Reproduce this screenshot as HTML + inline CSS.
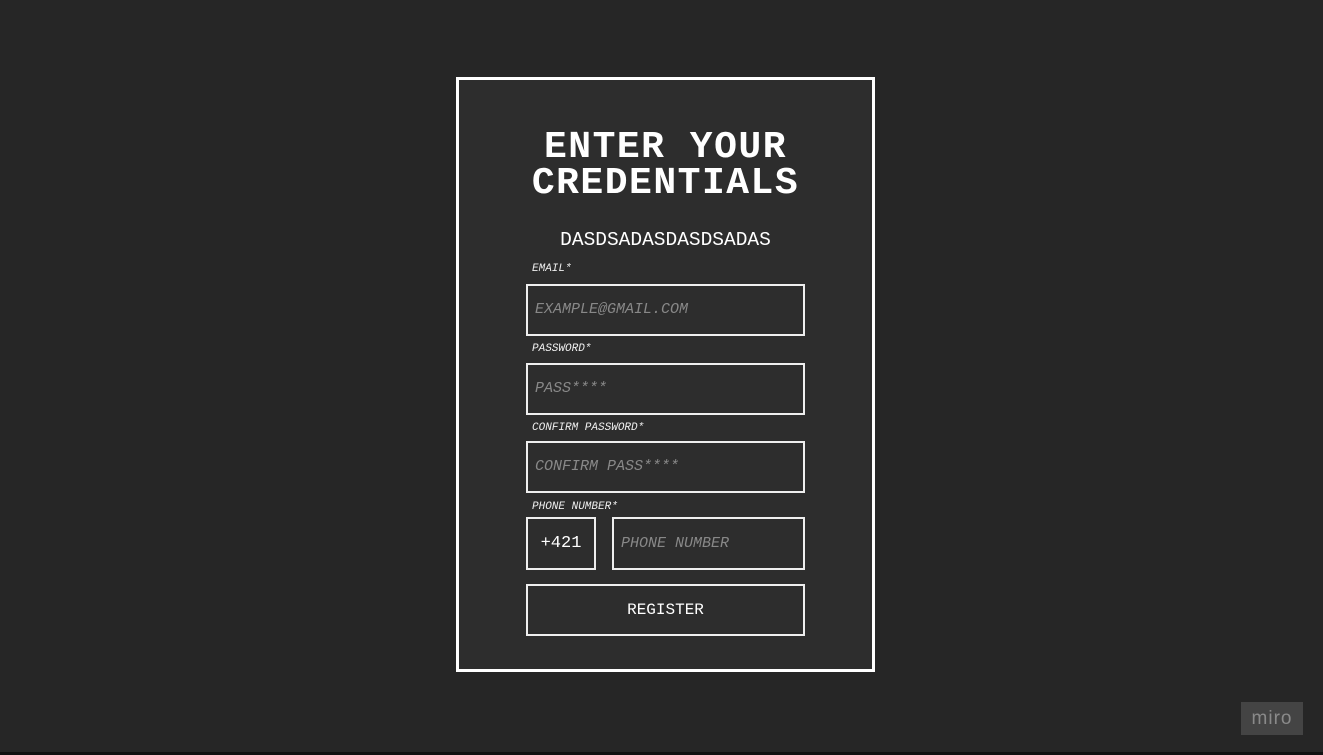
<!DOCTYPE html>
<html><head><style>
body{margin:0;width:1323px;height:755px;background:#262626;position:relative;overflow:hidden;font-family:"Liberation Mono",monospace;color:#fff}
.bar{position:absolute;left:0;top:752px;width:1323px;height:3px;background:#111}
.card{position:absolute;left:456px;top:77px;width:413px;height:589px;border:3px solid #fff;background:#2d2d2d}
.a{position:absolute}
.t{left:0;width:419px;text-align:center;font-size:38px;font-weight:bold;line-height:36px;top:130px;letter-spacing:1.5px}
.s{left:0;width:419px;text-align:center;font-size:19.5px;top:229px}
.l{font-size:11px;font-style:italic;left:532px;color:#eee}
.b{border:2px solid #eee;box-sizing:border-box;height:52px}
.p{font-size:15px;font-style:italic;color:#888;padding-left:7px;line-height:48px}
.miro{position:absolute;left:1241px;top:702px;width:62px;height:33px;background:#444;color:#8a8a8a;font-family:"Liberation Sans",sans-serif;font-size:19px;text-align:center;line-height:33px;letter-spacing:1px}
</style></head><body>
<div class="card"></div>
<div class="a t" style="left:456px">ENTER YOUR<br>CREDENTIALS</div>
<div class="a s" style="left:456px">DASDSADASDASDSADAS</div>
<div class="a l" style="top:263px">EMAIL*</div>
<div class="a b p" style="left:526px;top:284px;width:279px">EXAMPLE@GMAIL.COM</div>
<div class="a l" style="top:343px">PASSWORD*</div>
<div class="a b p" style="left:526px;top:363px;width:279px">PASS****</div>
<div class="a l" style="top:422px">CONFIRM PASSWORD*</div>
<div class="a b p" style="left:526px;top:441px;width:279px">CONFIRM PASS****</div>
<div class="a l" style="top:501px">PHONE NUMBER*</div>
<div class="a b" style="left:526px;top:517px;width:70px;height:53px;text-align:center;line-height:49px;font-size:17px">+421</div>
<div class="a b p" style="left:612px;top:517px;width:193px;height:53px;line-height:49px">PHONE NUMBER</div>
<div class="a b" style="left:526px;top:584px;width:279px;text-align:center;line-height:48px;font-size:16px">REGISTER</div>
<div class="miro">miro</div>
<div class="bar"></div>
</body></html>
